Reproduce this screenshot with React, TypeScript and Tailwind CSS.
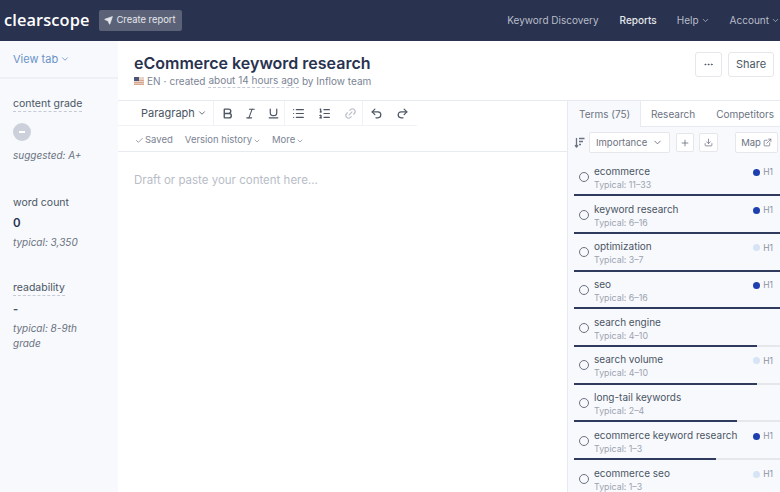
import { Bold, ChevronDown, Download, ExternalLink, Italic, Link2, List, ListOrdered, MoreHorizontal, Plus, Redo2, Send, Underline, Undo2, Check } from "lucide-react"

interface Term {
  name: string
  typical: string
  h1?: "dark" | "light"
  progress: number
}

const terms: Term[] = [
  { name: "ecommerce", typical: "11–33", h1: "dark", progress: 100 },
  { name: "keyword research", typical: "6–16", h1: "dark", progress: 100 },
  { name: "optimization", typical: "3–7", h1: "light", progress: 100 },
  { name: "seo", typical: "6–16", h1: "dark", progress: 100 },
  { name: "search engine", typical: "4–10", progress: 89 },
  { name: "search volume", typical: "4–10", h1: "light", progress: 89 },
  { name: "long-tail keywords", typical: "2–4", progress: 79 },
  { name: "ecommerce keyword research", typical: "1–3", h1: "dark", progress: 69 },
  { name: "ecommerce seo", typical: "1–3", h1: "light", progress: 69 },
]

function Flag() {
  return (
    <svg width="10" height="8" viewBox="0 0 10 8" className="shrink-0">
      <rect width="10" height="8" fill="#e8d5c8" />
      <rect y="3" width="10" height="1" fill="#d9a58e" />
      <rect y="5" width="10" height="1.2" fill="#d9a58e" />
      <rect y="7" width="10" height="1" fill="#d9a58e" />
      <rect width="5" height="4" fill="#4a5578" />
    </svg>
  )
}

function SortIcon() {
  return (
    <svg width="11" height="11" viewBox="0 0 11 11" fill="none" stroke="currentColor" strokeWidth="1.3" className="shrink-0">
      <path d="M2.5 1v9M1 8.3l1.5 1.7 1.5-1.7" />
      <path d="M5 1.5h5.5M5 4.5h4M5 7.5h2" />
    </svg>
  )
}

function TermRow({ term }: { term: Term }) {
  return (
    <div className="relative h-[37.7px] pl-[6px] shrink-0">
      <div className="flex items-start h-full pt-[6.5px]">
        <div className="w-[10px] h-[10px] rounded-full border-[1.5px] border-[#6b7280] mt-[7px] ml-[5px] mr-[5px] shrink-0" />
        <div className="flex-1 min-w-0">
          <div className="text-[10px] leading-[13px] text-[#4b5563] whitespace-nowrap">{term.name}</div>
          <div className="text-[8.8px] leading-[13px] text-[#9ca3af]">Typical: {term.typical}</div>
        </div>
        {term.h1 && (
          <div className="flex items-center gap-[3px] mt-[2px] pr-[7px] h-[11px]">
            <span className={`w-[7px] h-[7px] rounded-full ${term.h1 === "dark" ? "bg-[#1e40af]" : "bg-[#d6e4f5]"}`} />
            <span className="text-[8.5px] text-[#8b93a1]">H1</span>
          </div>
        )}
      </div>
      <div className="absolute bottom-0 left-[6px] right-0 h-[2px] bg-[#e5e7eb]">
        <div className="h-full bg-[#2f3a5c]" style={{ width: `${term.progress}%` }} />
      </div>
    </div>
  )
}

export default function App() {
  return (
    <div className="w-[780px] h-[492px] overflow-hidden flex flex-col bg-white font-['Inter',sans-serif]">
      <header className="h-[41px] shrink-0 bg-[#29324f] flex items-center pl-[4px]">
        <span className="font-['Open_Sans',sans-serif] text-[16.4px] font-semibold text-white tracking-[0.1px]">clearscope</span>
        <button className="ml-[9px] h-[21px] w-[83px] rounded-[2px] bg-[#5b6277] flex items-center justify-center gap-[3px] text-[9.4px] text-[#e5e7eb]">
          <Send size={9} fill="currentColor" />
          Create report
        </button>
        <nav className="ml-auto flex items-center text-[10px] text-[#b8bdc9]">
          <span>Keyword Discovery</span>
          <span className="ml-[21px] text-[#e5e7eb] font-medium">Reports</span>
          <span className="ml-[20px] flex items-center gap-[2px]">Help <ChevronDown size={9} /></span>
          <span className="ml-[20px] flex items-center gap-[2px]">Account <ChevronDown size={9} /></span>
        </nav>
      </header>

      <div className="flex flex-1 min-h-0">
        <aside className="w-[118px] shrink-0 bg-[#f7f9fd]">
          <div className="h-[38px] border-b-2 border-[#eef0f5] pl-[13px] flex items-center text-[11px] text-[#6b93c9] gap-[2px]">
            View tab <ChevronDown size={10} />
          </div>
          <div className="pl-[13px] pr-[6px] pt-[10px]">
            <span className="text-[10.5px] leading-[14px] text-[#4b5563] border-b border-dashed border-[#c5cad4] inline-block">content grade</span>
            <div className="mt-[10px] w-[18px] h-[18px] rounded-full bg-[#cbd0da] flex items-center justify-center">
              <span className="w-[6px] h-[1.5px] bg-white" />
            </div>
            <div className="mt-[7px] text-[10px] leading-[14px] italic text-[#6b7280]">suggested: A+</div>

            <div className="mt-[34px] text-[10.5px] leading-[14px] text-[#4b5563]">word count</div>
            <div className="mt-[6px] text-[11.5px] leading-[14px] font-semibold text-[#29324f]">0</div>
            <div className="mt-[5px] text-[10px] leading-[14px] italic text-[#6b7280]">typical: 3,350</div>

            <span className="mt-[32px] text-[10.5px] leading-[14px] text-[#4b5563] border-b border-dashed border-[#c5cad4] inline-block">readability</span>
            <div className="mt-[5px] text-[11px] leading-[14px] font-bold text-[#4b5563]">-</div>
            <div className="mt-[5px] w-[75px] text-[10px] leading-[15px] italic text-[#6b7280]">typical: 8-9th grade</div>
          </div>
        </aside>

        <div className="flex-1 min-w-0 flex flex-col">
          <div className="h-[60px] shrink-0 flex items-start border-b border-[#e8eaf2] pl-[16px] pr-[6px]">
            <div className="pt-[12px]">
              <h1 className="text-[16px] leading-[20px] font-semibold text-[#29324f]">eCommerce keyword research</h1>
              <div className="flex items-center text-[10px] leading-[14px] text-[#7b8494]">
                <Flag />
                <span className="ml-[3px]">EN</span>
                <span className="ml-[3px]">·</span>
                <span className="ml-[3px]">created</span>
                <span className="ml-[3px] border-b border-dashed border-[#c5cad4]">about 14 hours ago</span>
                <span className="ml-[3px]">by Inflow team</span>
              </div>
            </div>
            <div className="ml-auto flex items-center gap-[6px] pt-[11px]">
              <button className="w-[27px] h-[25px] rounded-[3px] border border-[#e5e7eb] flex items-center justify-center text-[#4b5563]">
                <MoreHorizontal size={11} />
              </button>
              <button className="w-[46px] h-[25px] rounded-[3px] border border-[#e5e7eb] text-[11px] text-[#4b5563]">Share</button>
            </div>
          </div>

          <div className="flex flex-1 min-h-0">
            <main className="flex-1 min-w-0">
              <div className="h-[51px] border-b border-[#e8eaf2]">
                <div className="h-[25px] w-[299px] border-b border-[#f1f2f6] flex items-center text-[#4b5563]">
                  <span className="flex items-center gap-[2px] pl-[23px] w-[96px] text-[11px] border-r border-[#f1f2f6] h-full">
                    Paragraph <ChevronDown size={10} />
                  </span>
                  <span className="flex items-center gap-[10px] pl-[7px] w-[71px] h-full border-r border-[#f1f2f6]">
                    <Bold size={13} strokeWidth={2.5} />
                    <Italic size={13} />
                    <Underline size={13} strokeWidth={2.2} />
                  </span>
                  <span className="flex items-center gap-[13px] pl-[7px] w-[78px] h-full border-r border-[#f1f2f6]">
                    <List size={13} strokeWidth={2.2} />
                    <ListOrdered size={13} strokeWidth={2.2} />
                    <Link2 size={13} className="text-[#b6bbc5] -rotate-45" />
                  </span>
                  <span className="flex items-center gap-[13px] pl-[7px]">
                    <Undo2 size={13} strokeWidth={2.2} />
                    <Redo2 size={13} strokeWidth={2.2} />
                  </span>
                </div>
                <div className="h-[26px] pl-[17px] pt-[3px] flex items-center text-[9.5px] text-[#7b8494]">
                  <Check size={9} />
                  <span className="ml-[1px]">Saved</span>
                  <span className="ml-[12px] flex items-center gap-[1px]">Version history <ChevronDown size={8} /></span>
                  <span className="ml-[11px] flex items-center gap-[1px]">More <ChevronDown size={8} /></span>
                </div>
              </div>
              <div className="pl-[16px] pt-[20px] text-[11.5px] text-[#b8bdc7]">Draft or paste your content here...</div>
            </main>

            <section className="w-[213px] shrink-0 bg-[#f7f9fd] border-l border-[#e8eaf2] flex flex-col overflow-hidden">
              <div className="h-[26px] shrink-0 flex items-center text-[10px] text-[#6b7280]">
                <span className="w-[73px] h-full flex items-center pl-[11px] pt-[1px] border-r border-[#e8eaf2]">Terms (75)</span>
                <div className="flex-1 h-full bg-white border-b border-[#e8eaf2] flex items-center pl-[10px] pt-[1px] gap-[21px] whitespace-nowrap">
                  <span>Research</span>
                  <span>Competitors</span>
                </div>
              </div>
              <div className="h-[31.5px] shrink-0 flex items-center pl-[6px] pr-[2px] text-[#6b7280]">
                <SortIcon />
                <button className="ml-[4px] w-[81px] h-[21px] rounded-[2px] border border-[#e5e7eb] bg-white flex items-center justify-between px-[6px] text-[9.5px]">
                  Importance <ChevronDown size={11} />
                </button>
                <button className="ml-[6px] w-[18px] h-[19px] rounded-[2px] border border-[#e5e7eb] bg-white flex items-center justify-center">
                  <Plus size={10} />
                </button>
                <button className="ml-[5px] w-[19px] h-[19px] rounded-[2px] border border-[#e5e7eb] bg-white flex items-center justify-center">
                  <Download size={9} />
                </button>
                <button className="ml-auto w-[43px] h-[21px] rounded-[2px] border border-[#e5e7eb] bg-white flex items-center justify-center gap-[2px] text-[9.5px]">
                  Map <ExternalLink size={9} />
                </button>
              </div>
              {terms.map((term) => (
                <TermRow key={term.name} term={term} />
              ))}
            </section>
          </div>
        </div>
      </div>
    </div>
  )
}
